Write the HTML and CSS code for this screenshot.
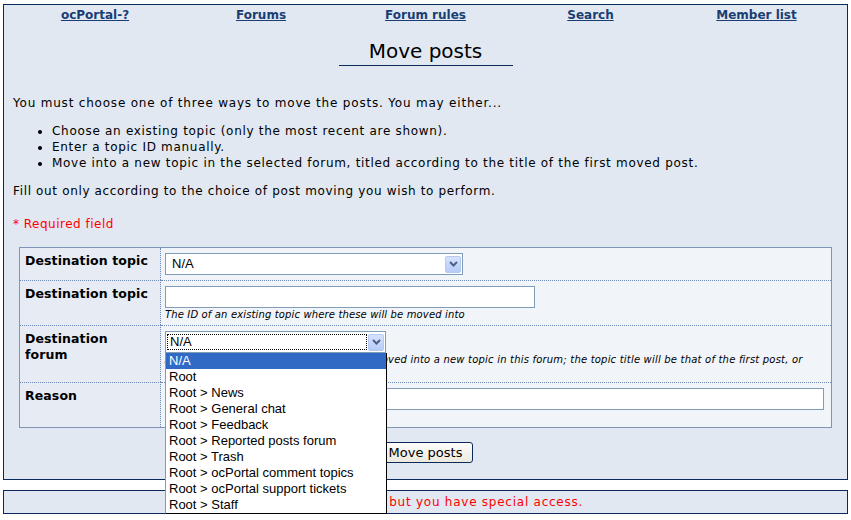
FILE: index.html
```html
<!DOCTYPE html>
<html lang="en">
<head>
<meta charset="utf-8">
<title>Move posts</title>
<link rel="stylesheet" href="styles.css">
</head>
<body>
<div class="page">
  <nav class="nav">
    <a href="#">ocPortal-?</a>
    <a href="#">Forums</a>
    <a href="#">Forum rules</a>
    <a href="#">Search</a>
    <a href="#">Member list</a>
  </nav>
  <div class="content">
    <div class="title-wrap"><h1 class="title">Move posts</h1></div>
    <p class="text intro">You must choose one of three ways to move the posts. You may either...</p>
    <ul class="ways">
      <li>Choose an existing topic (only the most recent are shown).</li>
      <li>Enter a topic ID manually.</li>
      <li>Move into a new topic in the selected forum, titled according to the title of the first moved post.</li>
    </ul>
    <p class="text fill">Fill out only according to the choice of post moving you wish to perform.</p>
    <p class="text required">* Required field</p>
    <table class="form">
      <tr class="r1">
        <th>Destination topic</th>
        <td>
          <div class="select wide"><span class="val">N/A</span><span class="drop"><svg width="9" height="6" viewBox="0 0 9 6"><polyline points="1,1 4.5,4.5 8,1" fill="none" stroke="#4d6185" stroke-width="2"/></svg></span></div>
        </td>
      </tr>
      <tr class="r2">
        <th>Destination topic</th>
        <td>
          <input class="field mid" type="text">
          <div class="hint">The ID of an existing topic where these will be moved into</div>
        </td>
      </tr>
      <tr class="r3">
        <th>Destination forum</th>
        <td>
          <div class="combo">
            <div class="select narrow"><span class="val focus">N/A</span><span class="drop"><svg width="9" height="6" viewBox="0 0 9 6"><polyline points="1,1 4.5,4.5 8,1" fill="none" stroke="#4d6185" stroke-width="2"/></svg></span></div>
            <ul class="listbox">
              <li class="sel">N/A</li>
              <li>Root</li>
              <li>Root &gt; News</li>
              <li>Root &gt; General chat</li>
              <li>Root &gt; Feedback</li>
              <li>Root &gt; Reported posts forum</li>
              <li>Root &gt; Trash</li>
              <li>Root &gt; ocPortal comment topics</li>
              <li>Root &gt; ocPortal support tickets</li>
              <li>Root &gt; Staff</li>
            </ul>
          </div>
          <div class="hint wide-hint">Alternatively, all of these posts may be moved into a new topic in this forum; the topic title will be that of the first post, or whatever you specify.</div>
        </td>
      </tr>
      <tr class="r4">
        <th>Reason</th>
        <td><input class="field full" type="text"></td>
      </tr>
    </table>
    <div class="actions"><button class="btn" type="button">Move posts</button></div>
  </div>
</div>
<div class="notice">Posting is closed, but you have special access.</div>
</body>
</html>
```
FILE: styles.css
```css
body {
  margin: 4px 3px 0 3px;
  font-family: "DejaVu Sans", Verdana, sans-serif;
  font-size: 12px;
  color: #000;
  background: #fff;
}

.page {
  border: 1px solid #0b2a5c;
  background: #e1e8f1;
  height: 476px;
  box-sizing: border-box;
}

.nav {
  display: grid;
  grid-template-columns: 182px 150px 179px 151px 181px;
  padding-top: 3px;
  line-height: 15px;
  text-align: center;
}

.nav a {
  color: #1a3e73;
  font-weight: bold;
  font-size: 12px;
  text-decoration: underline;
}

.content {
  padding: 0 9px;
}

.title-wrap {
  text-align: center;
  margin-top: 16px;
}

.title {
  display: inline-block;
  width: 174px;
  margin: 0;
  padding: 0 0 2px 0;
  border-bottom: 1px solid #0b2a5c;
  font-size: 20px;
  line-height: 24px;
  font-weight: normal;
  color: #000;
}

.text {
  margin: 0;
  line-height: 16px;
  letter-spacing: 0.7px;
}

.intro {
  margin-top: 29px;
  letter-spacing: 0.8px;
}

.ways {
  margin: 12px 0 0 0;
  padding-left: 39px;
  line-height: 16px;
  letter-spacing: 0.7px;
}

.fill {
  margin-top: 12px;
  letter-spacing: 0.65px;
}

.required {
  margin-top: 17px;
  color: #ff0000;
  letter-spacing: 0.5px;
}

.form {
  margin: 15px 0 0 6px;
  width: 813px;
  border: 1px solid #7f95b6;
  border-spacing: 0;
}

.form th {
  width: 124px;
  padding: 5px 11px 0 5px;
  vertical-align: top;
  text-align: left;
  font-size: 12.5px;
  line-height: 16px;
  letter-spacing: 0.1px;
  background: #e6ebf4;
  border-right: 1px dotted #6d8ab7;
}

.form td {
  padding: 5px 7px 0 4px;
  vertical-align: top;
  background: #f1f4f9;
}

.form tr + tr th,
.form tr + tr td {
  border-top: 1px dotted #6d8ab7;
}

.r1 td { padding-bottom: 5px; }
.r2 td { padding-bottom: 4px; }
.r3 td { padding-bottom: 3px; }
.r4 td { padding-bottom: 17px; }

.select {
  display: flex;
  align-items: center;
  height: 22px;
  box-sizing: border-box;
  border: 1px solid #7f9db9;
  background: #fff;
  font-family: "Liberation Sans", Arial, sans-serif;
  font-size: 13px;
}

.select.wide { width: 298px; }
.select.narrow { width: 221px; }

.val {
  flex: 1;
  padding-left: 6px;
  line-height: 16px;
}

.val.focus {
  margin: 0 0 0 1px;
  padding-left: 3px;
  outline: 1px dotted #000;
  outline-offset: -1px;
  color: #000;
}

.drop {
  display: flex;
  align-items: center;
  justify-content: center;
  width: 16px;
  height: 17px;
  margin: 0 1px 0 1px;
  box-sizing: border-box;
  border: 1px solid #b6c9f3;
  border-radius: 2px;
  background: linear-gradient(#d6e2fd, #b7cbf8);
}

.field {
  display: block;
  height: 22px;
  box-sizing: border-box;
  border: 1px solid #7f9db9;
  background: #fff;
  margin: 0;
  padding: 0 3px;
}

.field.mid { width: 370px; }
.field.full { width: 659px; }

.hint {
  font-size: 10px;
  font-style: italic;
  line-height: 13px;
  letter-spacing: 0.14px;
}

.hint.wide-hint {
  letter-spacing: 0.2px;
}

.combo {
  position: relative;
}

.listbox {
  position: absolute;
  left: 0;
  top: 22px;
  width: 222px;
  box-sizing: border-box;
  margin: 0;
  padding: 0;
  list-style: none;
  background: #fff;
  border-left: 1px solid #7f9db9;
  border-right: 1px solid #000;
  border-bottom: 1px solid #000;
  font-family: "Liberation Sans", Arial, sans-serif;
  font-size: 13px;
  line-height: 16px;
  z-index: 5;
}

.listbox li {
  padding-left: 3px;
  white-space: nowrap;
}

.listbox li.sel {
  background: #316ac5;
  color: #fff;
}

.actions {
  margin-top: 14px;
  text-align: center;
}

.btn {
  height: 21px;
  width: 95px;
  padding: 0;
  border: 1px solid #0b2a5c;
  border-radius: 3px;
  background: linear-gradient(#fdfdfb, #ece9dd);
  font-family: "DejaVu Sans", Verdana, sans-serif;
  font-size: 13px;
  color: #000;
}

.notice {
  margin-top: 10px;
  height: 24px;
  box-sizing: border-box;
  border: 1px solid #0b2a5c;
  background: #e1e8f1;
  color: #ff0000;
  text-align: center;
  line-height: 22px;
  letter-spacing: 0.75px;
}
```
